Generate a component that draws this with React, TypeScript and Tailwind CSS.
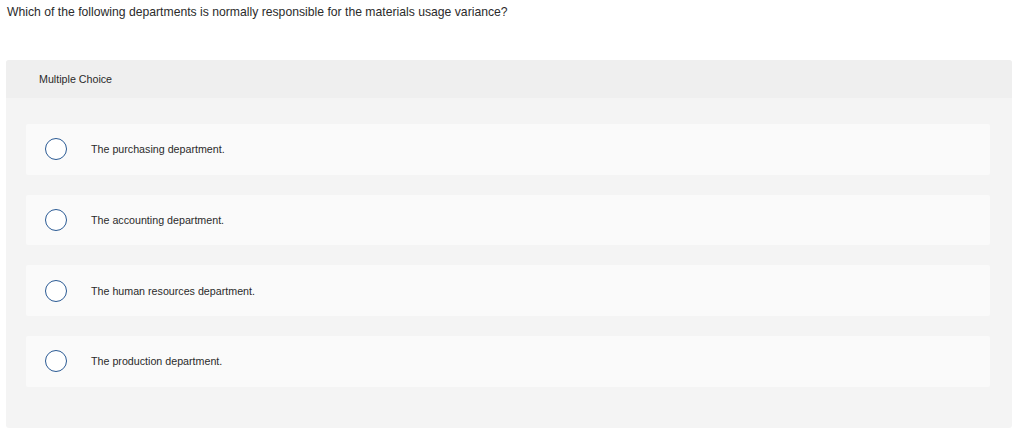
import React from 'react';

const options = [
  'The purchasing department.',
  'The accounting department.',
  'The human resources department.',
  'The production department.',
];

const Radio: React.FC = () => (
  <span className="block h-[22px] w-[22px] shrink-0 rounded-full border border-[#2a5a94] bg-white" />
);

export default function App() {
  return (
    <div className="h-[437px] w-[1024px] bg-white font-['Liberation_Sans',Arial,sans-serif] text-[#2b2b2b]">
      <p className="px-[7px] pt-[5px] text-[12.2px] leading-[14px]">
        Which of the following departments is normally responsible for the materials usage variance?
      </p>
      <div className="ml-[6px] mt-[41px] w-[1006px] overflow-hidden rounded-[3px] bg-[#f4f4f4]">
        <div className="flex h-[38px] items-center bg-[#efefef] pl-[33px] text-[10.7px]">Multiple Choice</div>
        <div className="flex flex-col gap-[20px] px-[20px] pb-[41px] pt-[26px]">
          {options.map((o) => (
            <div key={o} className="flex h-[50.7px] w-[964px] items-center rounded-[2px] bg-[#fafafa] pl-[19px]">
              <Radio />
              <span className="ml-[24px] text-[10.7px]">{o}</span>
            </div>
          ))}
        </div>
      </div>
    </div>
  );
}
